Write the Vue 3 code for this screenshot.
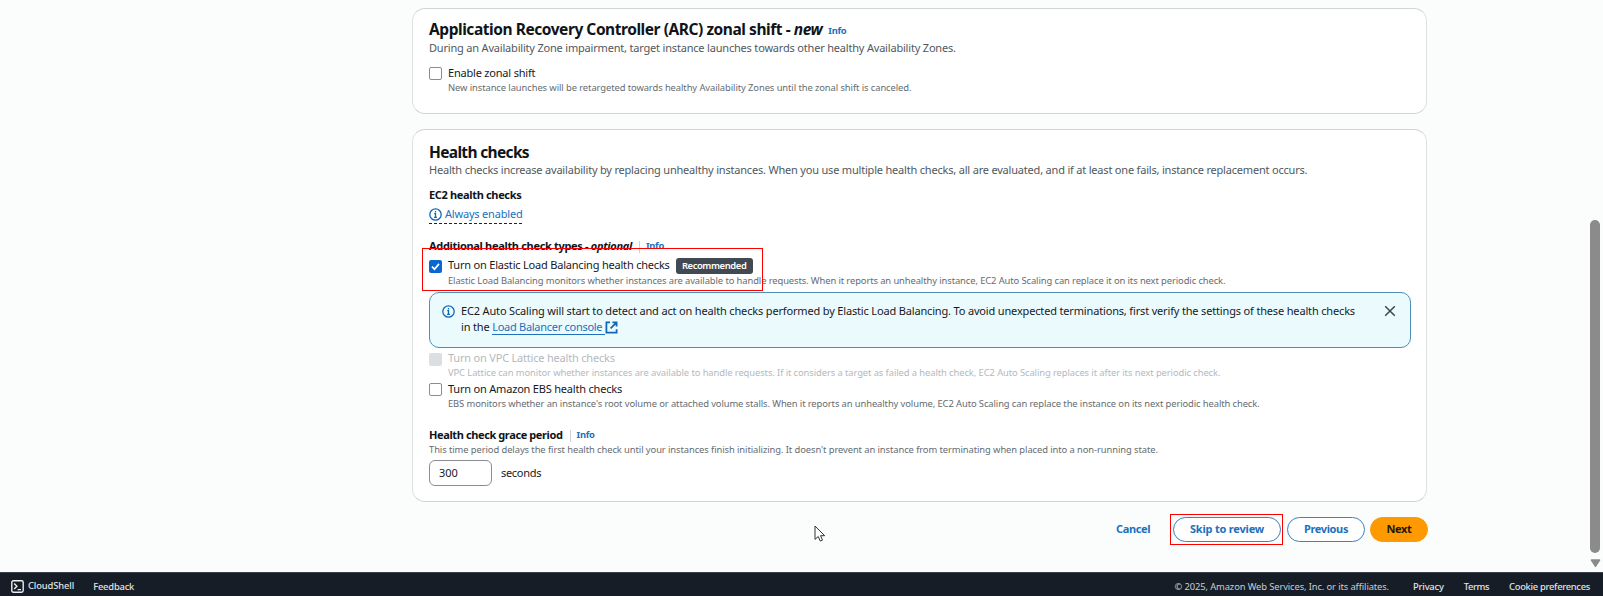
<script setup>
import { ref } from 'vue'

const elb = ref(true)
const ebs = ref(false)
const zonal = ref(false)
const grace = ref('300')
</script>

<template>
  <div class="page">
    <main class="content">
      <section class="panel arc">
        <div class="title-row">
          <h2 class="title arc-title">Application Recovery Controller (ARC) zonal shift - <em>new</em></h2>
          <a class="info">Info</a>
        </div>
        <p class="subtitle arc-sub">During an Availability Zone impairment, target instance launches towards other healthy Availability Zones.</p>
        <div class="option zonal">
          <span class="box" :class="{ checked: zonal }"></span>
          <div class="option-text">
            <div class="label">Enable zonal shift</div>
            <div class="hint hint-zonal">New instance launches will be retargeted towards healthy Availability Zones until the zonal shift is canceled.</div>
          </div>
        </div>
      </section>

      <section class="panel health">
        <h2 class="title health-title">Health checks</h2>
        <p class="subtitle health-sub">Health checks increase availability by replacing unhealthy instances. When you use multiple health checks, all are evaluated, and if at least one fails, instance replacement occurs.</p>

        <h3 class="field ec2">EC2 health checks</h3>
        <a class="always">
          <svg class="i-icon" viewBox="0 0 16 16"><circle cx="8" cy="8" r="7" /><path d="M8 12V7H6.4M6.2 11.6h3.6M8 3.7v1.9" /></svg>
          <span>Always enabled</span>
        </a>

        <div class="field-row additional">
          <h3 class="field">Additional health check types - <em>optional</em></h3>
          <span class="divider"></span>
          <a class="info">Info</a>
        </div>

        <div class="option elb">
          <span class="box" :class="{ checked: elb }">
            <svg v-if="elb" viewBox="0 0 13 13"><path d="M3 6.6l2.5 2.6L10 3.9" /></svg>
          </span>
          <div class="option-text">
            <div class="label-row">
              <span class="label label-elb">Turn on Elastic Load Balancing health checks</span>
              <span class="badge">Recommended</span>
            </div>
            <div class="hint">Elastic Load Balancing monitors whether instances are available to handle requests. When it reports an unhealthy instance, EC2 Auto Scaling can replace it on its next periodic check.</div>
          </div>
          <div class="mark mark-elb"></div>
        </div>

        <div class="alert">
          <svg class="i-icon" viewBox="0 0 16 16"><circle cx="8" cy="8" r="7" /><path d="M8 12V7H6.4M6.2 11.6h3.6M8 3.7v1.9" /></svg>
          <div class="alert-text">
            EC2 Auto Scaling will start to detect and act on health checks performed by Elastic Load Balancing. To avoid unexpected terminations, first verify the settings of these health checks<br>
            <span class="second">in the <a class="lb-link">Load Balancer console&nbsp;</a><svg class="ext" viewBox="0 0 13 13"><path d="M5 1.4H1.4v10.2h10.2V8.2M7.4 1.4h4.2v4.2M11.4 1.6L5.6 7.4" /></svg></span>
          </div>
          <svg class="close" viewBox="0 0 12 12"><path d="M1.2 1.2l9.6 9.6M10.8 1.2L1.2 10.8" /></svg>
        </div>

        <div class="option vpc disabled">
          <span class="box"></span>
          <div class="option-text">
            <div class="label">Turn on VPC Lattice health checks</div>
            <div class="hint">VPC Lattice can monitor whether instances are available to handle requests. If it considers a target as failed a health check, EC2 Auto Scaling replaces it after its next periodic check.</div>
          </div>
        </div>
        <div class="option ebs">
          <span class="box" :class="{ checked: ebs }"></span>
          <div class="option-text">
            <div class="label">Turn on Amazon EBS health checks</div>
            <div class="hint">EBS monitors whether an instance's root volume or attached volume stalls. When it reports an unhealthy volume, EC2 Auto Scaling can replace the instance on its next periodic health check.</div>
          </div>
        </div>

        <div class="field-row grace">
          <h3 class="field">Health check grace period</h3>
          <span class="divider"></span>
          <a class="info">Info</a>
        </div>
        <div class="hint hint-grace">This time period delays the first health check until your instances finish initializing. It doesn't prevent an instance from terminating when placed into a non-running state.</div>
        <div class="input-row">
          <input v-model="grace" class="input" type="text">
          <span class="label">seconds</span>
        </div>
      </section>

      <div class="actions">
        <button class="btn link">Cancel</button>
        <div class="skip-wrap">
          <button class="btn skip">Skip to review</button>
          <div class="mark mark-skip"></div>
        </div>
        <button class="btn prev">Previous</button>
        <button class="btn next">Next</button>
      </div>
    </main>

    <footer class="footer">
      <svg class="shell" viewBox="0 0 13 13"><rect x=".8" y=".8" width="11.4" height="11.4" rx="1.6" /><path d="M3.2 3.6l2.7 2.7-2.7 2.7M6.6 9.6h3.4" /></svg>
      <span class="f-shell">CloudShell</span>
      <span class="f-feedback">Feedback</span>
      <span class="copy">© 2025, Amazon Web Services, Inc. or its affiliates.</span>
      <span class="f-privacy">Privacy</span>
      <span class="f-terms">Terms</span>
      <span class="f-cookie">Cookie preferences</span>
    </footer>

    <div class="scrollbar">
      <div class="thumb"></div>
      <svg class="arrow" viewBox="0 0 11 9"><path d="M1.4 1h8.2L5.5 7.4z" /></svg>
    </div>
    <svg class="cursor" viewBox="0 0 12 18"><path d="M1 1v13.4l3.2-2.9 2.1 4.6 2.2-1-2-4.4h4.2z" /></svg>
  </div>
</template>

<style>
body { margin: 0; background: #fbfdfd; }
</style>

<style scoped>
.page {
  position: relative;
  display: flex;
  flex-direction: column;
  width: 1603px;
  height: 596px;
  box-sizing: border-box;
  overflow: hidden;
  background: #fbfdfd;
  color: #16191f;
  font-family: "Noto Sans", "Open Sans", sans-serif;
  font-size: 11px;
  line-height: 16px;
  letter-spacing: -0.19px;
}
.page * { box-sizing: border-box; }
h2, h3, p { margin: 0; }
em { font-style: italic; }
.content { width: 1015px; height: 572px; margin-left: 412px; padding-top: 8px; white-space: nowrap; }
.panel { border: 1px solid #d0d4d6; border-radius: 13px; background: #fff; padding: 0 15px 0 16px; border-left-color: #dee1e3; border-right-color: #dee1e3; }
.arc { height: 106px; padding-top: 10px; }
.title { font-size: 15.5px; line-height: 20px; font-weight: 700; letter-spacing: -0.445px; color: #0f141a; }
.title-row { display: flex; }
.title-row .info { margin-left: 6px; padding-top: 4px; }
.health-title { letter-spacing: -0.66px; }
.subtitle { margin-top: 1px; color: #50585d; }
.health-sub { margin-top: 0; letter-spacing: -0.195px; }
.info { font-size: 9.4px; font-weight: 700; line-height: 16px; letter-spacing: -0.3px; color: #2070bd; }
.option { position: relative; display: flex; }
.box { flex: none; width: 13px; height: 13px; border: 1px solid #8c8c94; border-radius: 2px; background: #fff; margin: 3px 6px 0 0; }
.box.checked { border: 0; background: #0868d0; }
.box svg { display: block; width: 13px; height: 13px; fill: none; stroke: #fff; stroke-width: 1.7; }
.label { line-height: 16px; letter-spacing: -0.2px; }
.hint { font-size: 9.4px; line-height: 14px; letter-spacing: -0.095px; color: #656c71; }
.hint-zonal, .hint-grace { letter-spacing: -0.082px; }
.zonal { margin-top: 9px; }
.zonal .box { margin-top: 2px; }

.health { height: 373px; margin-top: 15px; padding-top: 12px; }
.field { font-size: 11px; line-height: 16px; font-weight: 700; letter-spacing: -0.34px; color: #0f141a; }
.ec2 { margin-top: 9px; }
.always { display: flex; width: 93px; height: 18px; margin-top: 3px; border-bottom: 1px dashed #1b232d; color: #2070bd; }
.always .i-icon { margin-top: 2px; margin-right: 3px; }
.i-icon { flex: none; width: 13px; height: 13px; fill: none; stroke: #1168b8; stroke-width: 1.6; }
.field-row { display: flex; }
.divider { width: 1px; height: 12px; margin: 3px 6px 0 7px; background: #cdd2d5; }
.additional { margin-top: 14px; }
.additional .field { letter-spacing: -0.32px; }
.elb { margin-top: 3px; }
.vpc .box { margin-top: 3px; }
.label-row { display: flex; }
.badge { width: 77px; height: 16px; margin-left: 6px; margin-top: 1px; border-radius: 3px; background: #414a52; color: #fff; font-size: 9.4px; line-height: 15px; font-weight: 600; letter-spacing: -0.38px; text-align: center; }
.mark { position: absolute; border: 1px solid #f00; pointer-events: none; }
.mark-elb { left: -7px; top: -9px; width: 341px; height: 43px; }
.alert { display: flex; width: 982px; height: 56px; margin-top: 4px; padding: 10px 0 0 13px; border: 1px solid #4c90b8; border-radius: 10px; background: #ebfbfd; }
.alert .i-icon { margin: 2px 6px 0 -1px; }
.alert-text { width: 894px; letter-spacing: -0.163px; }
.lb-link { color: #2070bd; border-bottom: 1px solid #2070bd; letter-spacing: -0.28px; }
.ext { width: 13px; height: 13px; vertical-align: -3px; fill: none; stroke: #1168b8; stroke-width: 1.8; }
.close { width: 12px; height: 12px; margin: 2px 0 0 29px; fill: none; stroke: #3c454d; stroke-width: 1.5; }
.vpc { margin-top: 2px; }
.disabled { color: #b4b9be; }
.disabled .hint { color: #b4b9be; letter-spacing: -0.087px; }
.disabled .box { border: 0; background: #dcdfe2; }
.ebs { margin-top: 1px; }
.ebs .box { margin-top: 2px; }
.grace { margin-top: 16px; }
.grace .field { letter-spacing: -0.39px; }
.input-row { display: flex; align-items: center; margin-top: 3px; gap: 9px; }
.input { width: 63px; height: 26px; border: 1px solid #8c8c94; border-radius: 6px; padding: 0 0 1px 9px; font: inherit; letter-spacing: 0; color: #16191f; background: #fff; outline: 0; }
.input-row .label { letter-spacing: -0.3px; padding-bottom: 1px; }

.actions { display: flex; justify-content: flex-end; margin-top: 15px; margin-right: -1px; }
.btn { height: 25px; border: 1px solid #3d83bd; border-radius: 13px; background: #fff; padding: 0 0 2px; color: #2070bd; font: 700 11px/21px "Noto Sans", "Open Sans", sans-serif; letter-spacing: -0.36px; text-align: center; }
.link { width: 36px; border-color: transparent; background: transparent; margin-right: 22px; padding: 0 0 2px; white-space: nowrap; }
.skip-wrap { position: relative; }
.skip { width: 108px; letter-spacing: -0.2px; }
.mark-skip { left: -3px; top: -3px; width: 113px; height: 31px; }
.prev { width: 78px; margin-left: 6px; }
.next { width: 58px; margin-left: 5px; border-color: #ff9900; background: #ff9900; color: #21180a; }

.footer { display: flex; height: 24px; padding: 6px 13px 0 11px; background: #161d26; border-top: 1px solid #3c434b; color: #e0e3e6; font-size: 9.4px; line-height: 16px; letter-spacing: -0.2px; font-weight: 500; white-space: nowrap; }
.shell { width: 13px; height: 13px; margin-top: 1px; fill: none; stroke: #eceef0; stroke-width: 1.4; }
.f-shell { margin-left: 4px; letter-spacing: -0.12px; margin-top: -1px; }
.f-feedback { margin-left: 19px; }
.copy { margin-left: auto; font-weight: 400; letter-spacing: -0.12px; color: #c9cdd1; }
.f-privacy { margin-left: 24px; }
.f-terms { margin-left: 20px; letter-spacing: -0.4px; }
.f-cookie { margin-left: 20px; letter-spacing: -0.3px; }

.scrollbar { position: absolute; right: 2px; top: 220px; width: 11px; }
.thumb { width: 10px; height: 333px; margin-left: 0; border-radius: 5px; background: #8b8b8b; }
.arrow { display: block; width: 11px; height: 9px; margin-top: 6px; fill: #8b8b8b; stroke: #8b8b8b; stroke-width: 1.4; stroke-linejoin: round; }
.cursor { position: absolute; left: 814px; top: 525px; width: 12px; height: 18px; fill: #fff; stroke: #333; stroke-width: 1; }
</style>
